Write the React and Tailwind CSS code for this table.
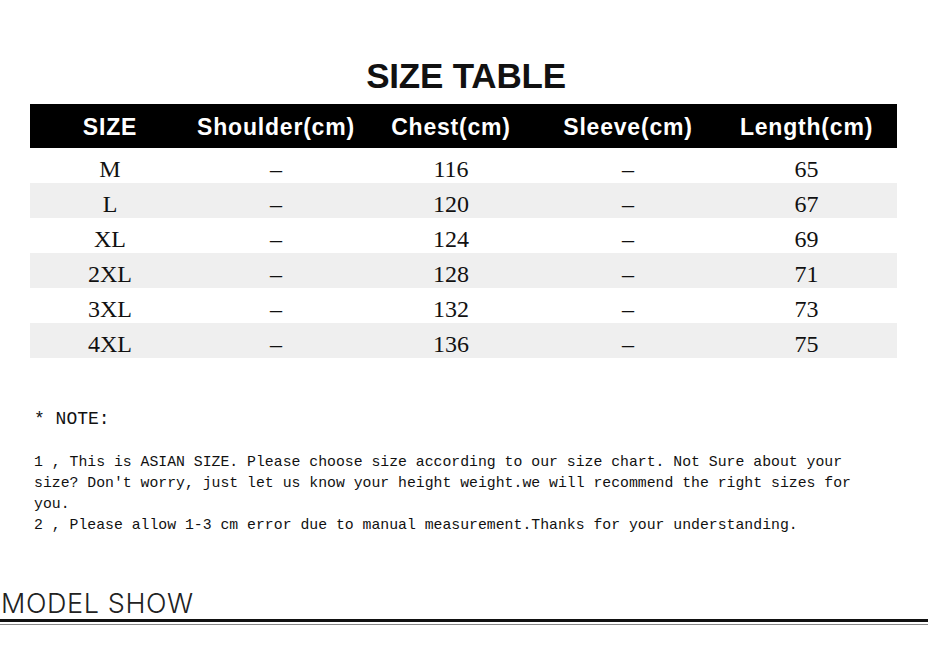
import React from "react";

const rows = [
  ["M", "–", "116", "–", "65"],
  ["L", "–", "120", "–", "67"],
  ["XL", "–", "124", "–", "69"],
  ["2XL", "–", "128", "–", "71"],
  ["3XL", "–", "132", "–", "73"],
  ["4XL", "–", "136", "–", "75"],
];
const heads = ["SIZE", "Shoulder(cm)", "Chest(cm)", "Sleeve(cm)", "Length(cm)"];

export default function App() {
  return (
    <div className="w-[930px] h-[651px] bg-white overflow-hidden text-black">
      <div className="pt-[58px] h-[93px] text-center font-bold text-[35px] leading-[35px] tracking-[-0.2px] text-[#111]" style={{ fontFamily: '"Liberation Sans", Arial, sans-serif' }}>
        <div className="pl-[2px]">SIZE TABLE</div>
      </div>
      <div className="mt-[11px] ml-[30px] w-[867px]">
        <div className="grid grid-cols-[160px_172px_178px_176px_181px] h-[44px] pt-[3px] bg-black items-center text-white font-bold text-[23px] tracking-[0.8px]" style={{ fontFamily: '"Liberation Sans", Arial, sans-serif' }}>
          {heads.map((h) => (
            <div key={h} className="text-center leading-none">{h}</div>
          ))}
        </div>
        {rows.map((r, i) => (
          <div key={i} className={`grid grid-cols-[160px_172px_178px_176px_181px] h-[35px] pt-[6px] items-center text-[24px] text-[#111] ${i % 2 === 1 ? "bg-[#efefef]" : "bg-white"}`} style={{ fontFamily: '"Liberation Serif", "Times New Roman", serif' }}>
            {r.map((c, j) => (
              <div key={j} className="text-center leading-none">{c}</div>
            ))}
          </div>
        ))}
      </div>
      <div className="ml-[34px] mt-[49px] text-[#111]" style={{ fontFamily: '"Liberation Mono", "Courier New", monospace' }}>
        <div className="text-[18px] leading-[24px]">* NOTE:</div>
        <div className="mt-[21px] text-[14.8px] leading-[21px] whitespace-pre">
          <div>1 , This is ASIAN SIZE. Please choose size according to our size chart. Not Sure about your</div>
          <div>size? Don't worry, just let us know your height weight.we will recommend the right sizes for</div>
          <div>you.</div>
          <div>2 , Please allow 1-3 cm error due to manual measurement.Thanks for your understanding.</div>
        </div>
      </div>
      <div className="mt-[55px] pl-[1px] text-[27px] leading-[26px] font-light tracking-[0.6px] text-[#222]" style={{ fontFamily: 'Inter, "Open Sans", sans-serif' }}>
        MODEL SHOW
      </div>
      <div className="mt-[2px] w-[928px] h-[3px] bg-[#111]"></div>
      <div className="mt-[2px] w-[928px] h-[1px] bg-[#888]"></div>
    </div>
  );
}
